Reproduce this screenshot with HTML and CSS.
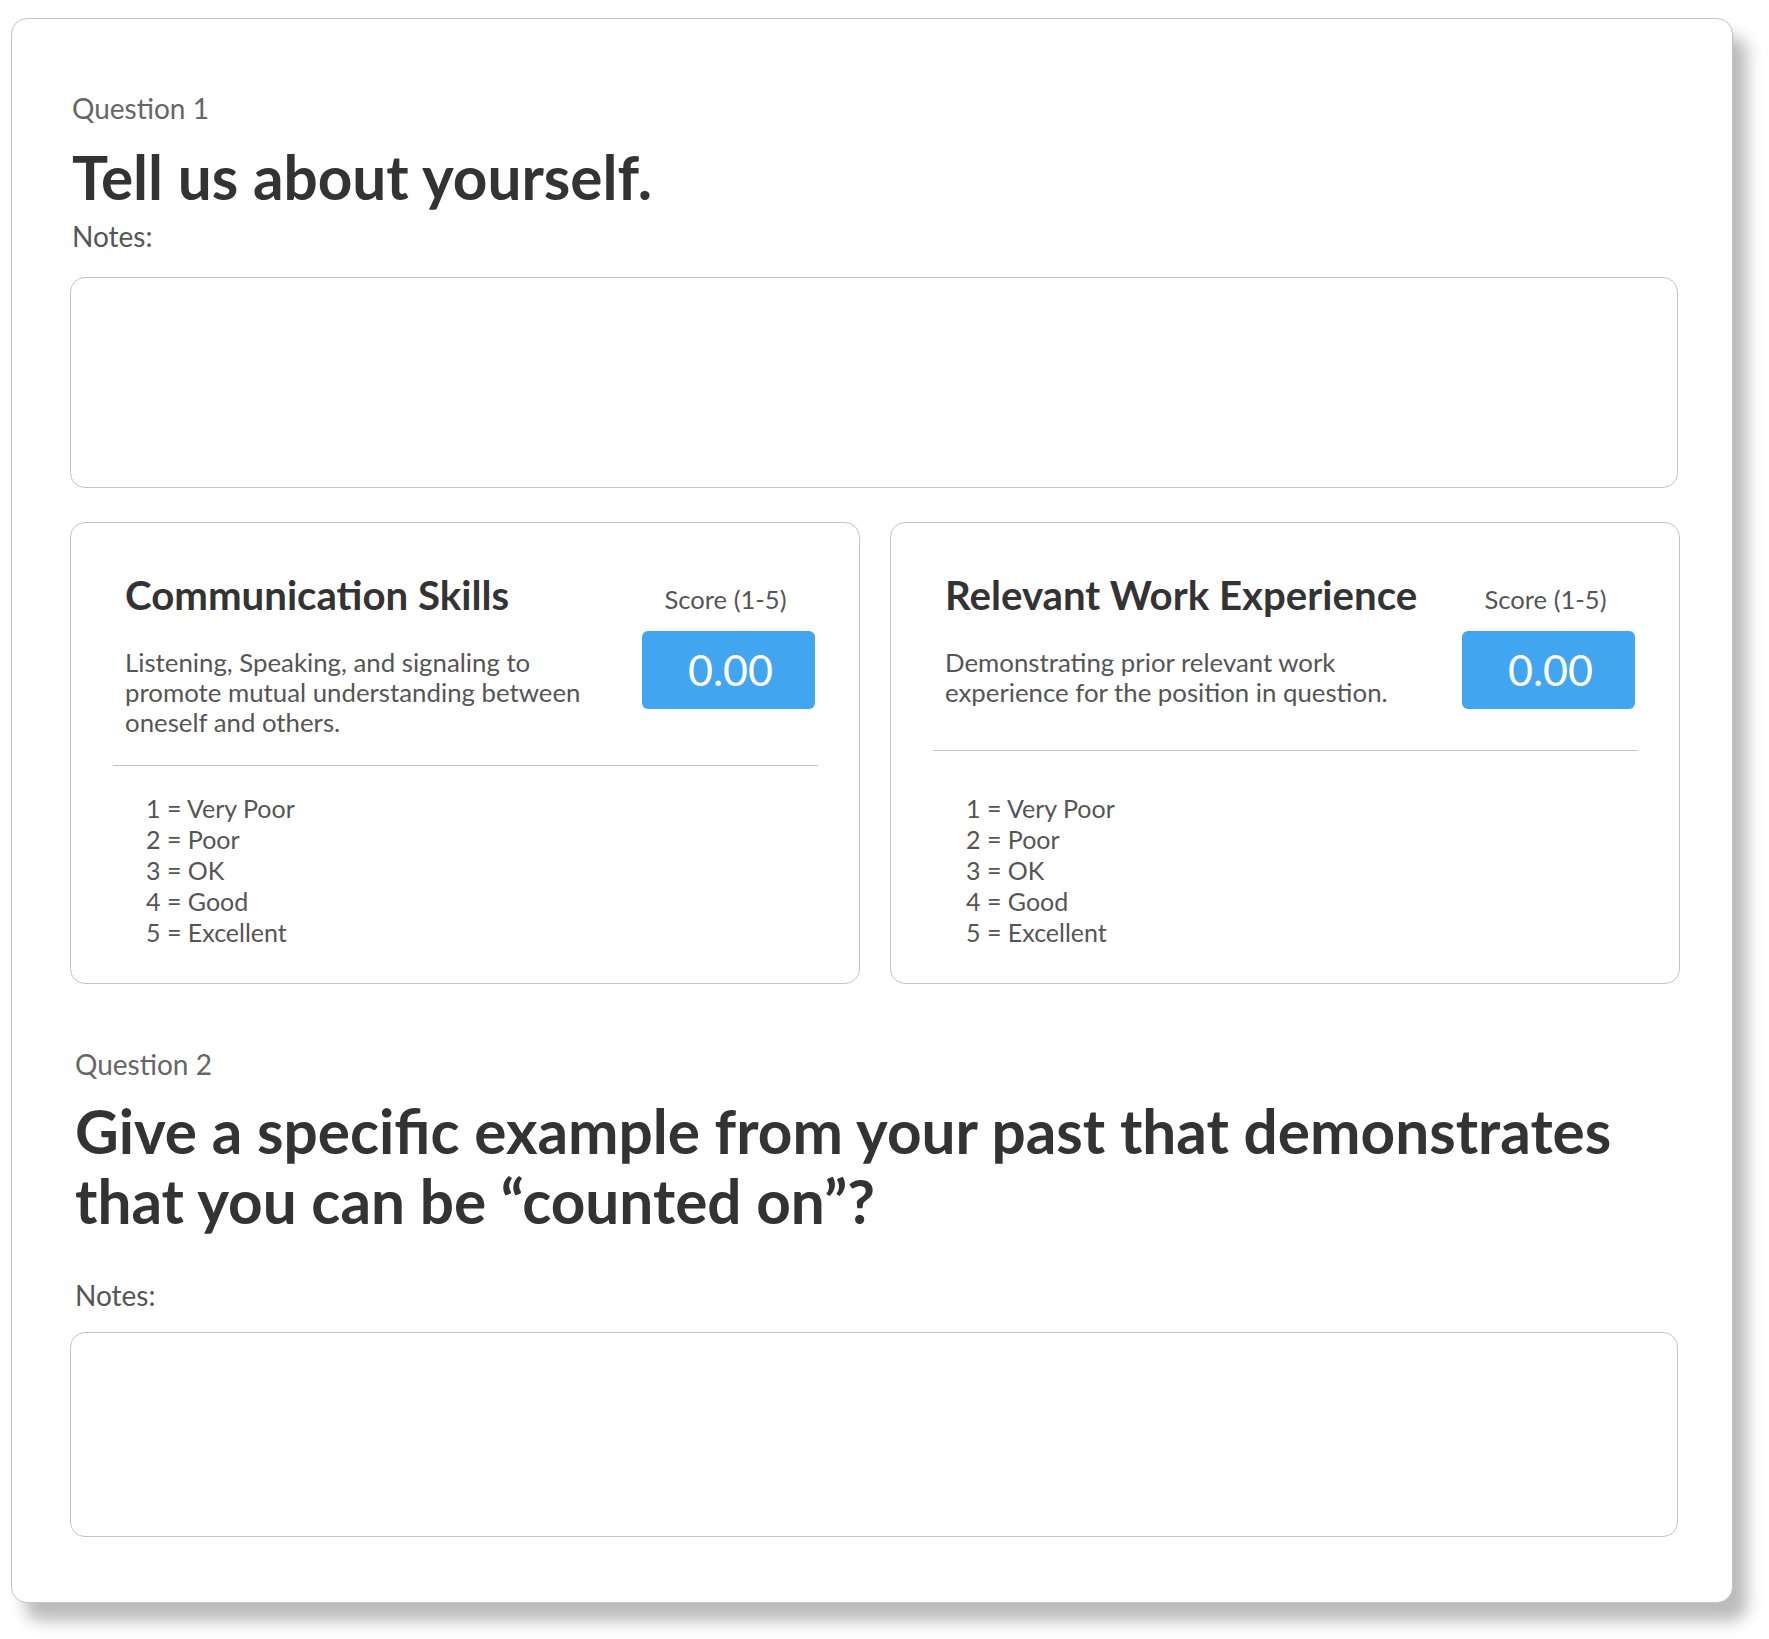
FILE: index.html
```html
<!DOCTYPE html>
<html>
<head>
<meta charset="utf-8">
<link rel="stylesheet" href="styles.css">
</head>
<body>
<div class="sheet">
  <section class="question">
    <div class="q-label">Question 1</div>
    <h1 class="q-title">Tell us about yourself.</h1>
    <div class="notes-label">Notes:</div>
    <div class="notes-box notes-box-1"></div>
  </section>

  <div class="skills">
    <div class="skill-card skill-a">
      <div class="skill-head">
        <div class="skill-text">
          <h2 class="skill-title">Communication Skills</h2>
          <p class="skill-desc">Listening, Speaking, and signaling to promote mutual understanding between oneself and others.</p>
        </div>
        <div class="score-col">
          <div class="score-label">Score (1-5)</div>
          <div class="score-box">0.00</div>
        </div>
      </div>
      <div class="divider"></div>
      <ul class="scale">
        <li>1 = Very Poor</li>
        <li>2 = Poor</li>
        <li>3 = OK</li>
        <li>4 = Good</li>
        <li>5 = Excellent</li>
      </ul>
    </div>
    <div class="skill-card skill-b">
      <div class="skill-head">
        <div class="skill-text">
          <h2 class="skill-title">Relevant Work Experience</h2>
          <p class="skill-desc">Demonstrating prior relevant work experience for the position in question.</p>
        </div>
        <div class="score-col">
          <div class="score-label">Score (1-5)</div>
          <div class="score-box">0.00</div>
        </div>
      </div>
      <div class="divider"></div>
      <ul class="scale">
        <li>1 = Very Poor</li>
        <li>2 = Poor</li>
        <li>3 = OK</li>
        <li>4 = Good</li>
        <li>5 = Excellent</li>
      </ul>
    </div>
  </div>

  <section class="question question-2">
    <div class="q-label">Question 2</div>
    <h1 class="q-title q-title-2">Give a specific example from your past that demonstrates that you can be “counted on”?</h1>
    <div class="notes-label notes-label-2">Notes:</div>
    <div class="notes-box notes-box-2"></div>
  </section>
</div>
</body>
</html>
```

FILE: styles.css
```css
* { box-sizing: border-box; }

html, body {
  margin: 0;
  padding: 0;
  background: #ffffff;
}

body {
  font-family: Lato, "Open Sans", "Liberation Sans", sans-serif;
  color: #333333;
  padding: 18px 0 36px 11px;
}

.sheet {
  width: 1722px;
  height: 1585px;
  background: #ffffff;
  border: 1px solid #c4c4c4;
  border-radius: 16px;
  box-shadow: 14px 18px 16px rgba(0, 0, 0, 0.27);
  padding: 73px 54px 0 58px;
}

.question {
  display: flex;
  flex-direction: column;
}

.q-label,
.q-title,
.notes-label {
  padding-left: 2px;
}

.q-label {
  font-size: 28px;
  line-height: 32px;
  color: #666666;
}

.q-title {
  margin: 18px 0 0 0;
  font-size: 60.3px;
  line-height: 70px;
  font-weight: 700;
  color: #333333;
}

.notes-label {
  margin-top: 8px;
  font-size: 28px;
  line-height: 32px;
  color: #555555;
}

.notes-box {
  margin-top: 25px;
  height: 211px;
  border: 1px solid #c4c4c4;
  border-radius: 15px;
}

.skills {
  margin-top: 34px;
  display: grid;
  grid-template-columns: 790px 790px;
  column-gap: 30px;
}

.skill-card {
  height: 462px;
  border: 1px solid #c4c4c4;
  border-radius: 15px;
  padding: 49px 0 35px 0;
  display: flex;
  flex-direction: column;
}

.skill-head {
  display: flex;
  padding: 0 44px 0 54px;
  gap: 38px;
}

.skill-text {
  flex: 1;
  min-width: 0;
}

.skill-title {
  margin: 0;
  font-size: 40.2px;
  line-height: 46px;
  font-weight: 700;
  color: #333333;
  white-space: nowrap;
}

.skill-desc {
  margin: 29px 0 0 0;
  font-size: 25.8px;
  line-height: 30px;
  color: #555555;
}

.score-col {
  width: 173px;
  flex: none;
  padding-top: 12px;
  padding-bottom: 13px;
  display: flex;
  flex-direction: column;
  align-items: center;
}

.score-label {
  font-size: 25.6px;
  line-height: 30px;
  color: #555555;
  margin-right: 6px;
}

.score-box {
  margin-top: 17px;
  width: 173px;
  height: 78px;
  background: #42a5f0;
  border-radius: 6px;
  color: #ffffff;
  font-size: 43px;
  line-height: 78px;
  text-align: center;
  padding-left: 4px;
}

.divider {
  margin: 28px 41px 0 42px;
  height: 1px;
  background: #c4c4c4;
}

.scale {
  list-style: none;
  margin: auto 0 0 0;
  padding: 0 0 0 75px;
  font-size: 25px;
  line-height: 31px;
  color: #555555;
}

.question-2 {
  margin-top: 64px;
}

.question-2 .q-label,
.question-2 .q-title,
.question-2 .notes-label {
  padding-left: 5px;
}

.q-title-2 {
  margin-top: 16px;
}

.notes-label-2 {
  margin-top: 43px;
}

.notes-box-2 {
  margin-top: 21px;
  height: 205px;
}
```
